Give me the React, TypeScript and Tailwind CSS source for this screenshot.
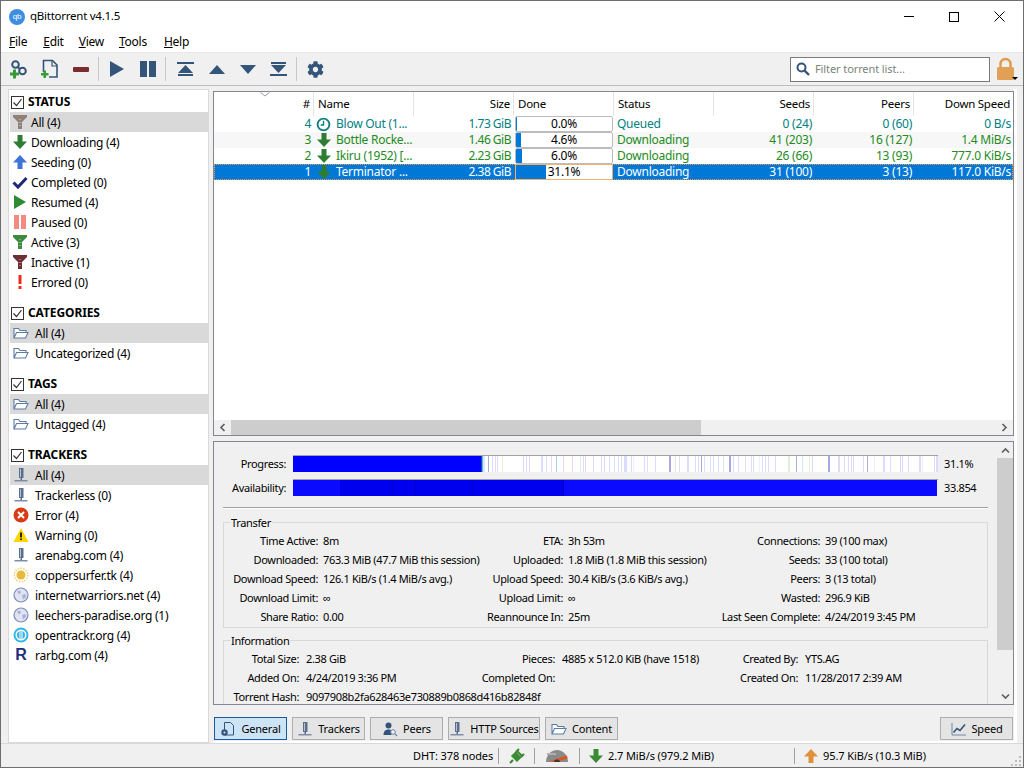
import React from "react";
import { FaCog } from "react-icons/fa";

const NAVY = "#34557a";

function Svg({ s = 16, children, className = "" }: { s?: number; children: React.ReactNode; className?: string }) {
  return (
    <svg width={s} height={s} viewBox="0 0 16 16" className={"shrink-0 " + className}>
      {children}
    </svg>
  );
}

const Funnel = ({ c }: { c: string }) => (
  <Svg>
    <path d="M1 1h14v2l-5 5v7H6V8L1 3z" fill={c} />
    <path d="M7 5h2v1H7zM6.500 8h3v1h-3zM7 11h2v1H7z" fill="#ffffff" opacity="0.35" />
  </Svg>
);
const DownArrow = ({ c = "#2f7d32", s = 16 }: { c?: string; s?: number }) => (
  <Svg s={s}>
    <path d="M5.500 1h5v6.500H15L8 15 1 7.500h4.500z" fill={c} />
  </Svg>
);
const UpArrow = ({ c = "#3f74d6", s = 16 }: { c?: string; s?: number }) => (
  <Svg s={s}>
    <path d="M5.500 15h5V8.500H15L8 1 1 8.500h4.500z" fill={c} />
  </Svg>
);
const Check = () => (
  <Svg>
    <path d="M1.500 8.500 6 13 14.500 4" stroke="#1e2a78" strokeWidth="3" fill="none" />
  </Svg>
);
const Play = ({ c = "#2e8b32" }: { c?: string }) => (
  <Svg>
    <path d="M2 1v14l12-7z" fill={c} />
  </Svg>
);
const Pause = () => (
  <Svg>
    <path d="M2 1h5v14H2zM9 1h5v14H9z" fill="#f58b80" />
  </Svg>
);
const Bang = () => (
  <Svg>
    <path d="M6.500 1h3v9h-3zM6.500 12h3v3h-3z" fill="#ee2b1c" />
  </Svg>
);
const Folder = () => (
  <Svg>
    <path d="M1 13V3.500h4.500l1.500 2h6v2M1 13l2.500-5.500H15L12.500 13z" fill="#ffffff" stroke="#5c7da3" strokeWidth="1.100" />
  </Svg>
);
const Server = () => (
  <Svg>
    <path d="M6 1h4.500v10H6z" fill="#5b6f8c" />
    <path d="M7 2h1v8H7z" fill="#b8c4d6" />
    <path d="M1.500 13h13v1.500h-13z" fill="#7d8ea6" />
    <path d="M7.500 11h1.500v2H7.500z" fill="#5b6f8c" />
  </Svg>
);
const ErrorIc = () => (
  <Svg>
    <circle cx="8" cy="8" r="7.500" fill="#d83c16" />
    <path d="M5 5l6 6M11 5l-6 6" stroke="#ffffff" strokeWidth="2" />
  </Svg>
);
const WarnIc = () => (
  <Svg>
    <path d="M8 1l7.500 14H.5z" fill="#ffd500" />
    <path d="M7.200 5.500h1.600v5H7.200zM7.200 11.500h1.600v1.600H7.200z" fill="#000000" />
  </Svg>
);
const Sun = () => (
  <Svg>
    <circle cx="8" cy="8" r="4.500" fill="#e8b93c" />
    <circle cx="8" cy="8" r="6.700" fill="none" stroke="#f2d27a" strokeWidth="1.500" strokeDasharray="1.500 1.300" />
  </Svg>
);
const Globe = () => (
  <Svg>
    <circle cx="8" cy="8" r="7" fill="#dfe3f2" stroke="#7f8cc0" strokeWidth="1.200" />
    <path d="M4 4.500l3-1 1 2-2 2zM9 8l3.500-1 .5 3-3 2.500z" fill="#a8b2d8" />
  </Svg>
);
const Tracker = () => (
  <Svg>
    <circle cx="8" cy="8" r="7.500" fill="#35b6e8" />
    <circle cx="8" cy="8" r="5.500" fill="#ffffff" />
    <circle cx="8" cy="8" r="4" fill="#35b6e8" />
    <path d="M6.500 4h1v8h-1zM8.500 4h1v8h-1z" fill="#ffffff" />
  </Svg>
);
const RIcon = () => (
  <span className="w-[16px] text-center text-[16px] leading-none font-bold text-[#1f2f80] font-['Liberation_Sans',sans-serif]">R</span>
);

type Row = { icon: React.ReactNode; text: string; sel?: boolean };

function Section({ title, rows, wide, mt = true }: { title: string; rows: Row[]; wide?: boolean; mt?: boolean }) {
  return (
    <div className={mt ? "mt-[11px]" : ""}>
      <div className="h-[20px] flex items-center pl-[1px]">
        <span className="w-[13px] h-[13px] border border-[#333] bg-white flex items-center justify-center mr-[4px]">
          <svg width="11" height="11" viewBox="0 0 11 11">
            <path d="M1.500 5.500 4.500 8.500 9.500 2" stroke="#333" strokeWidth="1.200" fill="none" />
          </svg>
        </span>
        <span className="font-bold tracking-[-0.1px] text-black">{title}</span>
      </div>
      {rows.map((r, i) => (
        <div key={i} className={"h-[20px] flex items-center " + (r.sel ? "bg-[#d9d9d9] " : "") + (wide ? "pl-[3px] gap-[6px]" : "pl-[2px] gap-[3px]")}>
          {r.icon}
          <span className="whitespace-nowrap pt-[2px]">{r.text}</span>
        </div>
      ))}
    </div>
  );
}

function Sidebar() {
  return (
    <div className="w-[201px] border border-[#d9d9d9] bg-white pt-[2px] pl-[1px] shrink-0 overflow-hidden">
      <Section
        mt={false}
        title="STATUS"
        rows={[
          { icon: <Funnel c="#8f8078" />, text: "All (4)", sel: true },
          { icon: <DownArrow />, text: "Downloading (4)" },
          { icon: <UpArrow />, text: "Seeding (0)" },
          { icon: <Check />, text: "Completed (0)" },
          { icon: <Play />, text: "Resumed (4)" },
          { icon: <Pause />, text: "Paused (0)" },
          { icon: <Funnel c="#3e8a3e" />, text: "Active (3)" },
          { icon: <Funnel c="#6d2f33" />, text: "Inactive (1)" },
          { icon: <Bang />, text: "Errored (0)" },
        ]}
      />
      <Section wide title="CATEGORIES" rows={[{ icon: <Folder />, text: "All (4)", sel: true }, { icon: <Folder />, text: "Uncategorized (4)" }]} />
      <Section wide title="TAGS" rows={[{ icon: <Folder />, text: "All (4)", sel: true }, { icon: <Folder />, text: "Untagged (4)" }]} />
      <Section
        wide
        title="TRACKERS"
        rows={[
          { icon: <Server />, text: "All (4)", sel: true },
          { icon: <Server />, text: "Trackerless (0)" },
          { icon: <ErrorIc />, text: "Error (4)" },
          { icon: <WarnIc />, text: "Warning (0)" },
          { icon: <Server />, text: "arenabg.com (4)" },
          { icon: <Sun />, text: "coppersurfer.tk (4)" },
          { icon: <Globe />, text: "internetwarriors.net (4)" },
          { icon: <Globe />, text: "leechers-paradise.org (1)" },
          { icon: <Tracker />, text: "opentrackr.org (4)" },
          { icon: <RIcon />, text: "rarbg.com (4)" },
        ]}
      />
    </div>
  );
}

const headers = [
  ["#", "r"],
  ["Name", "l"],
  ["Size", "r"],
  ["Done", "l"],
  ["Status", "l"],
  ["Seeds", "r"],
  ["Peers", "r"],
  ["Down Speed", "r"],
];

const torrents = [
  { n: "4", name: "Blow Out (1...", size: "1.73 GiB", pct: 0, done: "0.0%", status: "Queued", seeds: "0 (24)", peers: "0 (60)", dl: "0 B/s", color: "text-[#008080]", queued: true },
  { n: "3", name: "Bottle Rocke...", size: "1.46 GiB", pct: 4.6, done: "4.6%", status: "Downloading", seeds: "41 (203)", peers: "16 (127)", dl: "1.4 MiB/s", color: "text-[#228b22]", alt: true },
  { n: "2", name: "Ikiru (1952) [...", size: "2.23 GiB", pct: 6, done: "6.0%", status: "Downloading", seeds: "26 (66)", peers: "13 (93)", dl: "777.0 KiB/s", color: "text-[#228b22]" },
  { n: "1", name: "Terminator ...", size: "2.38 GiB", pct: 31.1, done: "31.1%", status: "Downloading", seeds: "31 (100)", peers: "3 (13)", dl: "117.0 KiB/s", color: "text-white", sel: true },
];

function TorrentTable() {
  return (
    <div className="h-[345px] border border-[#82878f] bg-white flex flex-col shrink-0 overflow-hidden">
      <div className="grid grid-cols-[repeat(7,100px)_99px] h-[24px] relative text-[11.5px]">
        {headers.map(([h, a], i) => (
          <div key={i} className={"flex items-center border-r border-[#e5e5e5] " + (i === 7 ? "border-r-0 " : "") + (a === "r" ? "justify-end pr-[3px]" : "pl-[4px]")}>
            {h}
          </div>
        ))}
        <svg width="10" height="5" viewBox="0 0 10 5" className="absolute left-[46px] top-0">
          <path d="M.5.5 5 4 9.500.5" stroke="#9a9a9a" fill="none" />
        </svg>
      </div>
      <div className="flex-1 min-h-0">
        {torrents.map((t) => (
          <div
            key={t.n}
            className={
              "grid grid-cols-[repeat(7,100px)_99px] items-center h-[16px] " +
              t.color +
              (t.sel ? " bg-[#0078d7] outline-1 -outline-offset-1 outline-dotted outline-[#f09a4a]" : t.alt ? " bg-[#f7f7f7]" : "")
            }
          >
            <div className="text-right pr-[3px]">{t.n}</div>
            <div className="flex items-center pl-[2px] whitespace-nowrap overflow-hidden">
              {t.queued ? (
                <svg width="15" height="15" viewBox="0 0 16 16" className="shrink-0 mr-[5px]">
                  <circle cx="8" cy="8" r="6.300" fill="none" stroke="#0f7f80" strokeWidth="2" />
                  <path d="M8 4v4.500H5" stroke="#0f7f80" strokeWidth="1.500" fill="none" />
                </svg>
              ) : (
                <span className="mr-[4px] flex">
                  <DownArrow c="#2f7d32" s={16} />
                </span>
              )}
              {t.name}
            </div>
            <div className="text-right pr-[3px] tracking-[-0.5px]">{t.size}</div>
            <div className="h-[16px] px-[1px] flex">
              <div className={"relative w-full h-full bg-white border border-[#bcbcbc] overflow-hidden text-black text-center leading-[14px] " + (t.sel ? "border-[#f0b070]" : "rounded-[2px]")}>
                <div className="absolute left-0 top-0 bottom-0 bg-[#0078d7]" style={{ width: t.pct + "%", minWidth: t.pct > 0 ? 5 : 1 }} />
                <span className="relative">{t.done}</span>
              </div>
            </div>
            <div className="pl-[3px]">{t.status}</div>
            <div className="text-right pr-[2px]">{t.seeds}</div>
            <div className="text-right pr-[2px]">{t.peers}</div>
            <div className="text-right pr-[2px]">{t.dl}</div>
          </div>
        ))}
      </div>
      <div className="h-[15px] bg-[#f0f0f0] flex items-center shrink-0">
        <div className="w-[17px] flex justify-center">
          <svg width="7" height="9" viewBox="0 0 7 9"><path d="M5.500 1 2 4.500 5.500 8" stroke="#606060" strokeWidth="1.700" fill="none" /></svg>
        </div>
        <div className="w-[470px] h-full bg-[#cdcdcd]" />
        <div className="flex-1" />
        <div className="w-[17px] flex justify-center">
          <svg width="7" height="9" viewBox="0 0 7 9"><path d="M1.500 1 5 4.500 1.500 8" stroke="#606060" strokeWidth="1.700" fill="none" /></svg>
        </div>
      </div>
    </div>
  );
}

const L = "#dcdcff", D = "#a9a9e2", G = "#d9f2d9", B = "#d2e8f6", Y = "#f0f0d6", T = "#a9d9d2";
const stripes: [number, number, string][] = [
  [481, 1, "#0050c0"], [482, 1, "#7aa8e0"], [483, 2, "#d2e8f6"], [488, 1, D], [492, 1, L], [495, 1, L], [497, 1, L], [502, 1, Y],
  [523, 1, L], [526, 1, L], [529, 1, L], [541, 2, L], [546, 1, L], [551, 1, L], [556, 1, T], [563, 1, L], [572, 1, L],
  [580, 1, G], [583, 1, L], [585, 1, L], [593, 1, L], [601, 1, L], [604, 1, L], [609, 1, L], [614, 1, L], [618, 1, L],
  [621, 1, L], [624, 3, L], [631, 1, L], [633, 1, "#eeeeff"], [644, 1, L], [647, 1, B], [655, 1, L], [669, 2, D], [675, 1, G],
  [679, 1, L], [687, 2, L], [695, 1, L], [698, 1, L], [701, 1, D], [704, 1, L], [710, 1, L], [713, 1, L], [718, 1, L],
  [723, 1, B], [729, 2, D], [733, 1, L], [738, 1, L], [745, 1, L], [751, 1, L], [753, 1, L], [759, 1, "#eeeeff"], [762, 1, L],
  [765, 1, L], [768, 1, L], [775, 1, L], [788, 2, G], [796, 1, D], [802, 1, B], [809, 1, Y], [812, 1, L], [828, 1, D],
  [829, 1, D], [838, 2, L], [844, 1, L], [848, 1, L], [851, 1, L], [853, 1, L], [863, 1, L], [867, 1, D], [874, 1, "#eeeeff"],
  [883, 2, L], [890, 1, L], [900, 1, L], [902, 1, L], [908, 1, L], [919, 2, L], [922, 1, "#eeeeff"], [934, 1, L], [936, 2, L],
];

function ProgressBar() {
  return (
    <svg width="645" height="17" className="shrink-0 block">
      <rect width="645" height="17" fill="#ffffff" />
      <rect width="188" height="17" fill="#0000ff" />
      {stripes.map(([x, w, c], i) => (
        <rect key={i} x={x - 293} width={w} height="17" fill={c} />
      ))}
      <rect width="645" height="1" fill="#a0a0a0" />
    </svg>
  );
}

function AvailBar() {
  return (
    <svg width="645" height="17" className="shrink-0 block">
      <rect width="644" height="17" fill="#0a0aff" />
      <rect x="47" width="224" height="17" fill="#0000ee" />
      <rect x="100" width="1" height="17" fill="#0000cc" />
      <rect x="122" width="1" height="17" fill="#0000cc" />
      <rect x="180" width="1" height="17" fill="#0000cc" />
      <rect x="270" width="1" height="17" fill="#0000cc" />
      <rect width="645" height="1" fill="#a0a0a0" />
    </svg>
  );
}

const transfer = [
  ["Time Active:", "8m", "ETA:", "3h 53m", "Connections:", "39 (100 max)"],
  ["Downloaded:", "763.3 MiB (47.7 MiB this session)", "Uploaded:", "1.8 MiB (1.8 MiB this session)", "Seeds:", "33 (100 total)"],
  ["Download Speed:", "126.1 KiB/s (1.4 MiB/s avg.)", "Upload Speed:", "30.4 KiB/s (3.6 KiB/s avg.)", "Peers:", "3 (13 total)"],
  ["Download Limit:", "∞", "Upload Limit:", "∞", "Wasted:", "296.9 KiB"],
  ["Share Ratio:", "0.00", "Reannounce In:", "25m", "Last Seen Complete:", "4/24/2019 3:45 PM"],
];
const information = [
  ["Total Size:", "2.38 GiB", "Pieces:", "4885 x 512.0 KiB (have 1518)", "Created By:", "YTS.AG"],
  ["Added On:", "4/24/2019 3:36 PM", "Completed On:", "", "Created On:", "11/28/2017 2:39 AM"],
  ["Torrent Hash:", "9097908b2fa628463e730889b0868d416b82848f", "", "", "", ""],
];

function InfoGrid({ rows, cols, pad }: { rows: string[][]; cols: string; pad: string }) {
  return (
    <div className={"grid " + cols + " auto-rows-[19px] items-center whitespace-nowrap"}>
      {rows.map((r, i) =>
        r.map((c, j) => (
          <div key={i + "-" + j} className={j % 2 === 0 ? "text-right" : pad}>
            {c}
          </div>
        ))
      )}
    </div>
  );
}

function Details() {
  return (
    <div className="mt-[5px] h-[264px] border border-[#82878f] flex shrink-0 bg-[#f0f0f0] text-[11px] tracking-[-0.35px]">
      <div className="flex-1 min-w-0 overflow-hidden pt-[13px]">
        <div className="flex items-center h-[17px]">
          <div className="w-[72px] text-right mr-[7px] shrink-0">Progress:</div>
          <ProgressBar />
          <div className="ml-[6px] whitespace-nowrap">31.1%</div>
        </div>
        <div className="flex items-center h-[17px] mt-[7px]">
          <div className="w-[72px] text-right mr-[7px] shrink-0">Availability:</div>
          <AvailBar />
          <div className="ml-[6px] whitespace-nowrap">33.854</div>
        </div>
        <div className="mx-[9px] mt-[11px] h-[2px] border-t border-[#a0a0a0] border-b-white border-b" />
        <fieldset className="mx-[9px] mt-[5px] border border-[#d9d9d9] h-[114px]">
          <legend className="ml-[6px] px-[1px] leading-[16px]"><span className="relative top-[1px]">Transfer</span></legend>
          <div className="pt-[1px]">
            <InfoGrid pad="pl-[5px]" rows={transfer} cols="grid-cols-[94px_146px_99px_157px_100px_150px]" />
          </div>
        </fieldset>
        <fieldset className="mx-[9px] mt-[4px] border border-[#d9d9d9] h-[90px]">
          <legend className="ml-[6px] px-[1px] leading-[16px]"><span className="relative top-[1px]">Information</span></legend>
          <div className="pt-[1px]">
            <InfoGrid pad="pl-[7px]" rows={information} cols="grid-cols-[75px_175px_81px_161px_82px_150px]" />
          </div>
        </fieldset>
      </div>
      <div className="w-[16px] flex flex-col shrink-0 bg-[#f0f0f0]">
        <div className="h-[16px] flex items-center justify-center">
          <svg width="9" height="7" viewBox="0 0 9 7"><path d="M1 5.500 4.500 2 8 5.500" stroke="#606060" strokeWidth="1.700" fill="none" /></svg>
        </div>
        <div className="h-[192px] bg-[#cdcdcd]" />
        <div className="flex-1" />
        <div className="h-[16px] flex items-center justify-center">
          <svg width="9" height="7" viewBox="0 0 9 7"><path d="M1 1.500 4.500 5 8 1.500" stroke="#606060" strokeWidth="1.700" fill="none" /></svg>
        </div>
      </div>
    </div>
  );
}

const DocGear = () => (
  <Svg>
    <path d="M4.500 1.500h6l3 3v9.500h-9z" fill="none" stroke={NAVY} strokeWidth="1" />
    <circle cx="4.500" cy="11.500" r="3.200" fill={NAVY} />
    <circle cx="4.500" cy="11.500" r="1" fill="#cde4f7" />
  </Svg>
);
const PeersIc = () => (
  <Svg>
    <circle cx="6.500" cy="4.500" r="3" fill={NAVY} />
    <path d="M1.500 14c0-4 2-5.500 5-5.500s3 1 3 5.500z" fill={NAVY} />
    <circle cx="11" cy="11" r="2.300" fill="#f0f0f0" stroke="#6d87a6" strokeWidth="1" />
    <path d="M12.700 12.700 15 15" stroke="#6d87a6" strokeWidth="1.200" />
  </Svg>
);
const SpeedIc = () => (
  <Svg>
    <path d="M1 2v12h14" stroke="#6f86a3" strokeWidth="1" fill="none" />
    <path d="M2.500 11.500 6 7.500l3 2 5-6" stroke={NAVY} strokeWidth="1.600" fill="none" />
  </Svg>
);

function Tab({ icon, label, w, active }: { icon: React.ReactNode; label: string; w: string; active?: boolean }) {
  return (
    <div className={"h-[23px] border flex items-center justify-center gap-[5px] whitespace-nowrap shrink-0 " + w + (active ? " bg-[#cde4f7] border-[#1a5c99]" : " bg-[#e4e4e4] border-[#adadad]")}>
      {icon}
      {label}
    </div>
  );
}

function Tabs() {
  return (
    <div className="mt-[12px] flex gap-[5px] shrink-0 px-[1px] text-[11px] tracking-[-0.2px]">
      <Tab w="w-[73px]" active icon={<DocGear />} label="General" />
      <Tab w="w-[73px]" icon={<Server />} label="Trackers" />
      <Tab w="w-[73px]" icon={<PeersIc />} label="Peers" />
      <Tab w="w-[92px]" icon={<Server />} label="HTTP Sources" />
      <Tab w="w-[73px]" icon={<Folder />} label="Content" />
      <div className="flex-1" />
      <Tab w="w-[73px]" icon={<SpeedIc />} label="Speed" />
    </div>
  );
}

const Sep = () => <div className="w-[1px] h-[16px] bg-[#a0a0a0] shrink-0" />;

function StatusBar() {
  return (
    <div className="h-[24px] border-t border-[#d9d9d9] flex items-center pl-[412px] shrink-0 relative whitespace-nowrap text-[11px] tracking-[-0.1px]">
      <div className="w-[85px]">DHT: 378 nodes</div>
      <Sep />
      <div className="w-[35px] flex justify-center">
        <svg width="16" height="16" viewBox="0 0 16 16">
          <path d="M1 15l3-3M3.500 8 8 12.500 11 9.500 6.500 5zM7 4l3-3M12 9l3-3M8.500 3.500l4 4" stroke="#3d8a35" strokeWidth="2.200" fill="#3d8a35" />
        </svg>
      </div>
      <Sep />
      <div className="w-[44px] flex justify-center">
        <svg width="24" height="14" viewBox="0 0 24 14">
          <path d="M1 13C1 6 6 1 12 1s11 5 11 12z" fill="#8a8a8a" />
          <path d="M2 4h9v2H2z" fill="#b0b0b0" />
          <path d="M5 12 22 6.500 22.500 9.500 10 13z" fill="#e0541e" />
          <path d="M9 13c0-1.500 1.200-2.500 3-2.500s3 1 3 2.500z" fill="#3a3a3a" />
        </svg>
      </div>
      <Sep />
      <div className="w-[214px] flex items-center pl-[8px] gap-[4px]">
        <DownArrow c="#3d8a35" />
        <span>2.7 MiB/s (979.2 MiB)</span>
      </div>
      <Sep />
      <div className="flex items-center pl-[8px] gap-[4px]">
        <UpArrow c="#e0913c" />
        <span>95.7 KiB/s (10.3 MiB)</span>
      </div>
      <svg width="11" height="11" viewBox="0 0 11 11" className="absolute right-[1px] bottom-[1px]">
        <path d="M8 1h2v2H8zM4 5h2v2H4zM8 5h2v2H8zM0 9h2v2H0zM4 9h2v2H4zM8 9h2v2H8z" fill="#bdbdbd" />
      </svg>
    </div>
  );
}

function ToolSep() {
  return <div className="w-[1px] h-[24px] bg-[#c8c8c8] shrink-0" />;
}

function TitleBar() {
  return (
    <div className="h-[31px] bg-white flex items-center shrink-0">
      <div className="ml-[8px] w-[16px] h-[16px] rounded-full bg-[#3d8ee0] text-white text-[8px] leading-[16px] text-center shrink-0 font-['Liberation_Sans',sans-serif]">qb</div>
      <div className="ml-[5px] text-[11.5px] pb-[2px]">qBittorrent v4.1.5</div>
      <div className="ml-auto flex items-center pr-[18px] gap-[35px]">
        <div className="w-[10px] h-[1px] bg-black" />
        <div className="w-[10px] h-[10px] border border-black" />
        <svg width="11" height="11" viewBox="0 0 11 11"><path d="M.5.5l10 10M10.500.5l-10 10" stroke="#000" strokeWidth="1" /></svg>
      </div>
    </div>
  );
}

function MenuBar() {
  const items: [string, string, string][] = [
    ["F", "ile", "mr-[16px]"],
    ["E", "dit", "mr-[15px]"],
    ["V", "iew", "mr-[15px]"],
    ["T", "ools", "mr-[17px]"],
    ["H", "elp", ""],
  ];
  return (
    <div className="h-[20px] bg-white flex items-center pl-[8px] shrink-0">
      {items.map(([a, b, c]) => (
        <span key={a} className={c}>
          <span className="underline">{a}</span>
          {b}
        </span>
      ))}
    </div>
  );
}

function ToolBtn({ children, w = "w-[31px]" }: { children: React.ReactNode; w?: string }) {
  return <div className={w + " h-[24px] flex items-center justify-center shrink-0"}>{children}</div>;
}

function Toolbar() {
  const G2 = "#3a9a3a";
  return (
    <div className="h-[34px] bg-[#f0f0f0] border-t border-[#e8e8e8] border-b border-b-[#bdbdbd] flex items-center pl-[2px] shrink-0">
      <ToolBtn>
        <svg width="20" height="20" viewBox="0 0 20 20">
          <circle cx="6.500" cy="5.500" r="3.300" fill="none" stroke={NAVY} strokeWidth="2" />
          <circle cx="13.500" cy="12" r="3.300" fill="none" stroke={NAVY} strokeWidth="2" />
          <path d="M8.500 8 11 10" stroke={NAVY} strokeWidth="2" />
          <path d="M4 10.500h3v3h3v3H7v3H4v-3H1v-3h3z" fill={G2} />
        </svg>
      </ToolBtn>
      <ToolBtn>
        <svg width="20" height="20" viewBox="0 0 20 20">
          <path d="M3.500 13V1.500h9l4.500 4.500v12H9" fill="none" stroke={NAVY} strokeWidth="1.600" />
          <path d="M12 1.500V7h5" fill="none" stroke={NAVY} strokeWidth="1.200" />
          <path d="M3.500 11.500h2.500V14h2.500v2.500H6V19H3.500v-2.500H1V14h2.500z" fill={G2} />
        </svg>
      </ToolBtn>
      <ToolBtn>
        <div className="w-[16px] h-[5px] bg-[#7b2d2d] rounded-[1px]" />
      </ToolBtn>
      <div className="w-[2px]" />
      <ToolSep />
      <div className="w-[2px]" />
      <ToolBtn>
        <svg width="16" height="16" viewBox="0 0 16 16"><path d="M1 0v16l14-8z" fill={NAVY} /></svg>
      </ToolBtn>
      <ToolBtn>
        <svg width="16" height="16" viewBox="0 0 16 16"><path d="M0 0h7v16H0zM9 0h7v16H9z" fill={NAVY} /></svg>
      </ToolBtn>
      <div className="w-[2px]" />
      <ToolSep />
      <div className="w-[4px]" />
      <ToolBtn>
        <svg width="17" height="14" viewBox="0 0 17 14"><path d="M0 0h17v2H0zM8.500 3 16 11H1zM1 12h15v2H1z" fill={NAVY} /></svg>
      </ToolBtn>
      <ToolBtn>
        <svg width="16" height="9" viewBox="0 0 16 9"><path d="M8 0l8 9H0z" fill={NAVY} /></svg>
      </ToolBtn>
      <ToolBtn>
        <svg width="16" height="9" viewBox="0 0 16 9"><path d="M8 9l8-9H0z" fill={NAVY} /></svg>
      </ToolBtn>
      <ToolBtn>
        <svg width="17" height="14" viewBox="0 0 17 14"><path d="M1 0h15v2H1zM1 3h15l-7.500 8zM0 12h17v2H0z" fill={NAVY} /></svg>
      </ToolBtn>
      <div className="w-[2px]" />
      <ToolSep />
      <div className="w-[3px]" />
      <ToolBtn>
        <FaCog size={17} color={NAVY} />
      </ToolBtn>
      <div className="ml-auto flex items-center">
        <div className="w-[200px] h-[25px] border border-[#7a7a7a] bg-white flex items-center pl-[5px] gap-[5px] text-[11px] tracking-[-0.1px]">
          <svg width="14" height="14" viewBox="0 0 14 14" className="shrink-0">
            <circle cx="5.500" cy="5.500" r="4" fill="none" stroke={NAVY} strokeWidth="2" />
            <path d="M8.500 8.500 13 13" stroke={NAVY} strokeWidth="2.400" />
          </svg>
          <span className="text-[#7a847a] whitespace-nowrap">Filter torrent list…</span>
        </div>
        <div className="w-[33px] h-[26px] relative flex justify-center items-center">
          <svg width="19" height="24" viewBox="0 0 19 24" className="mr-[2px]">
            <path d="M4.500 11V7a5 5 0 0 1 10 0v4" fill="none" stroke="#e09a4a" strokeWidth="2.400" />
            <rect x="1" y="10" width="17" height="13" rx="1.500" fill="#e0a056" />
          </svg>
          <svg width="6" height="3" viewBox="0 0 6 3" className="absolute right-[5px] bottom-[2px]">
            <path d="M0 0h6L3 3z" fill="#000" />
          </svg>
        </div>
      </div>
    </div>
  );
}

export default function App() {
  return (
    <div className="w-[1024px] h-[768px] border border-[#6e6e6e] bg-[#f0f0f0] flex flex-col overflow-hidden text-[12px] leading-[16px] text-black font-['Noto_Sans',sans-serif] tracking-[-0.25px]">
      <TitleBar />
      <MenuBar />
      <Toolbar />
      <div className="flex-1 min-h-0 flex pl-[7px] pt-[3px]">
        <Sidebar />
        <div className="ml-[4px] w-[801px] flex flex-col pt-[2px]">
          <TorrentTable />
          <Details />
          <Tabs />
          <div className="flex-1" />
          <div className="h-[2px] bg-white" />
        </div>
        <div className="w-[3px] bg-white" />
      </div>
      <StatusBar />
    </div>
  );
}
